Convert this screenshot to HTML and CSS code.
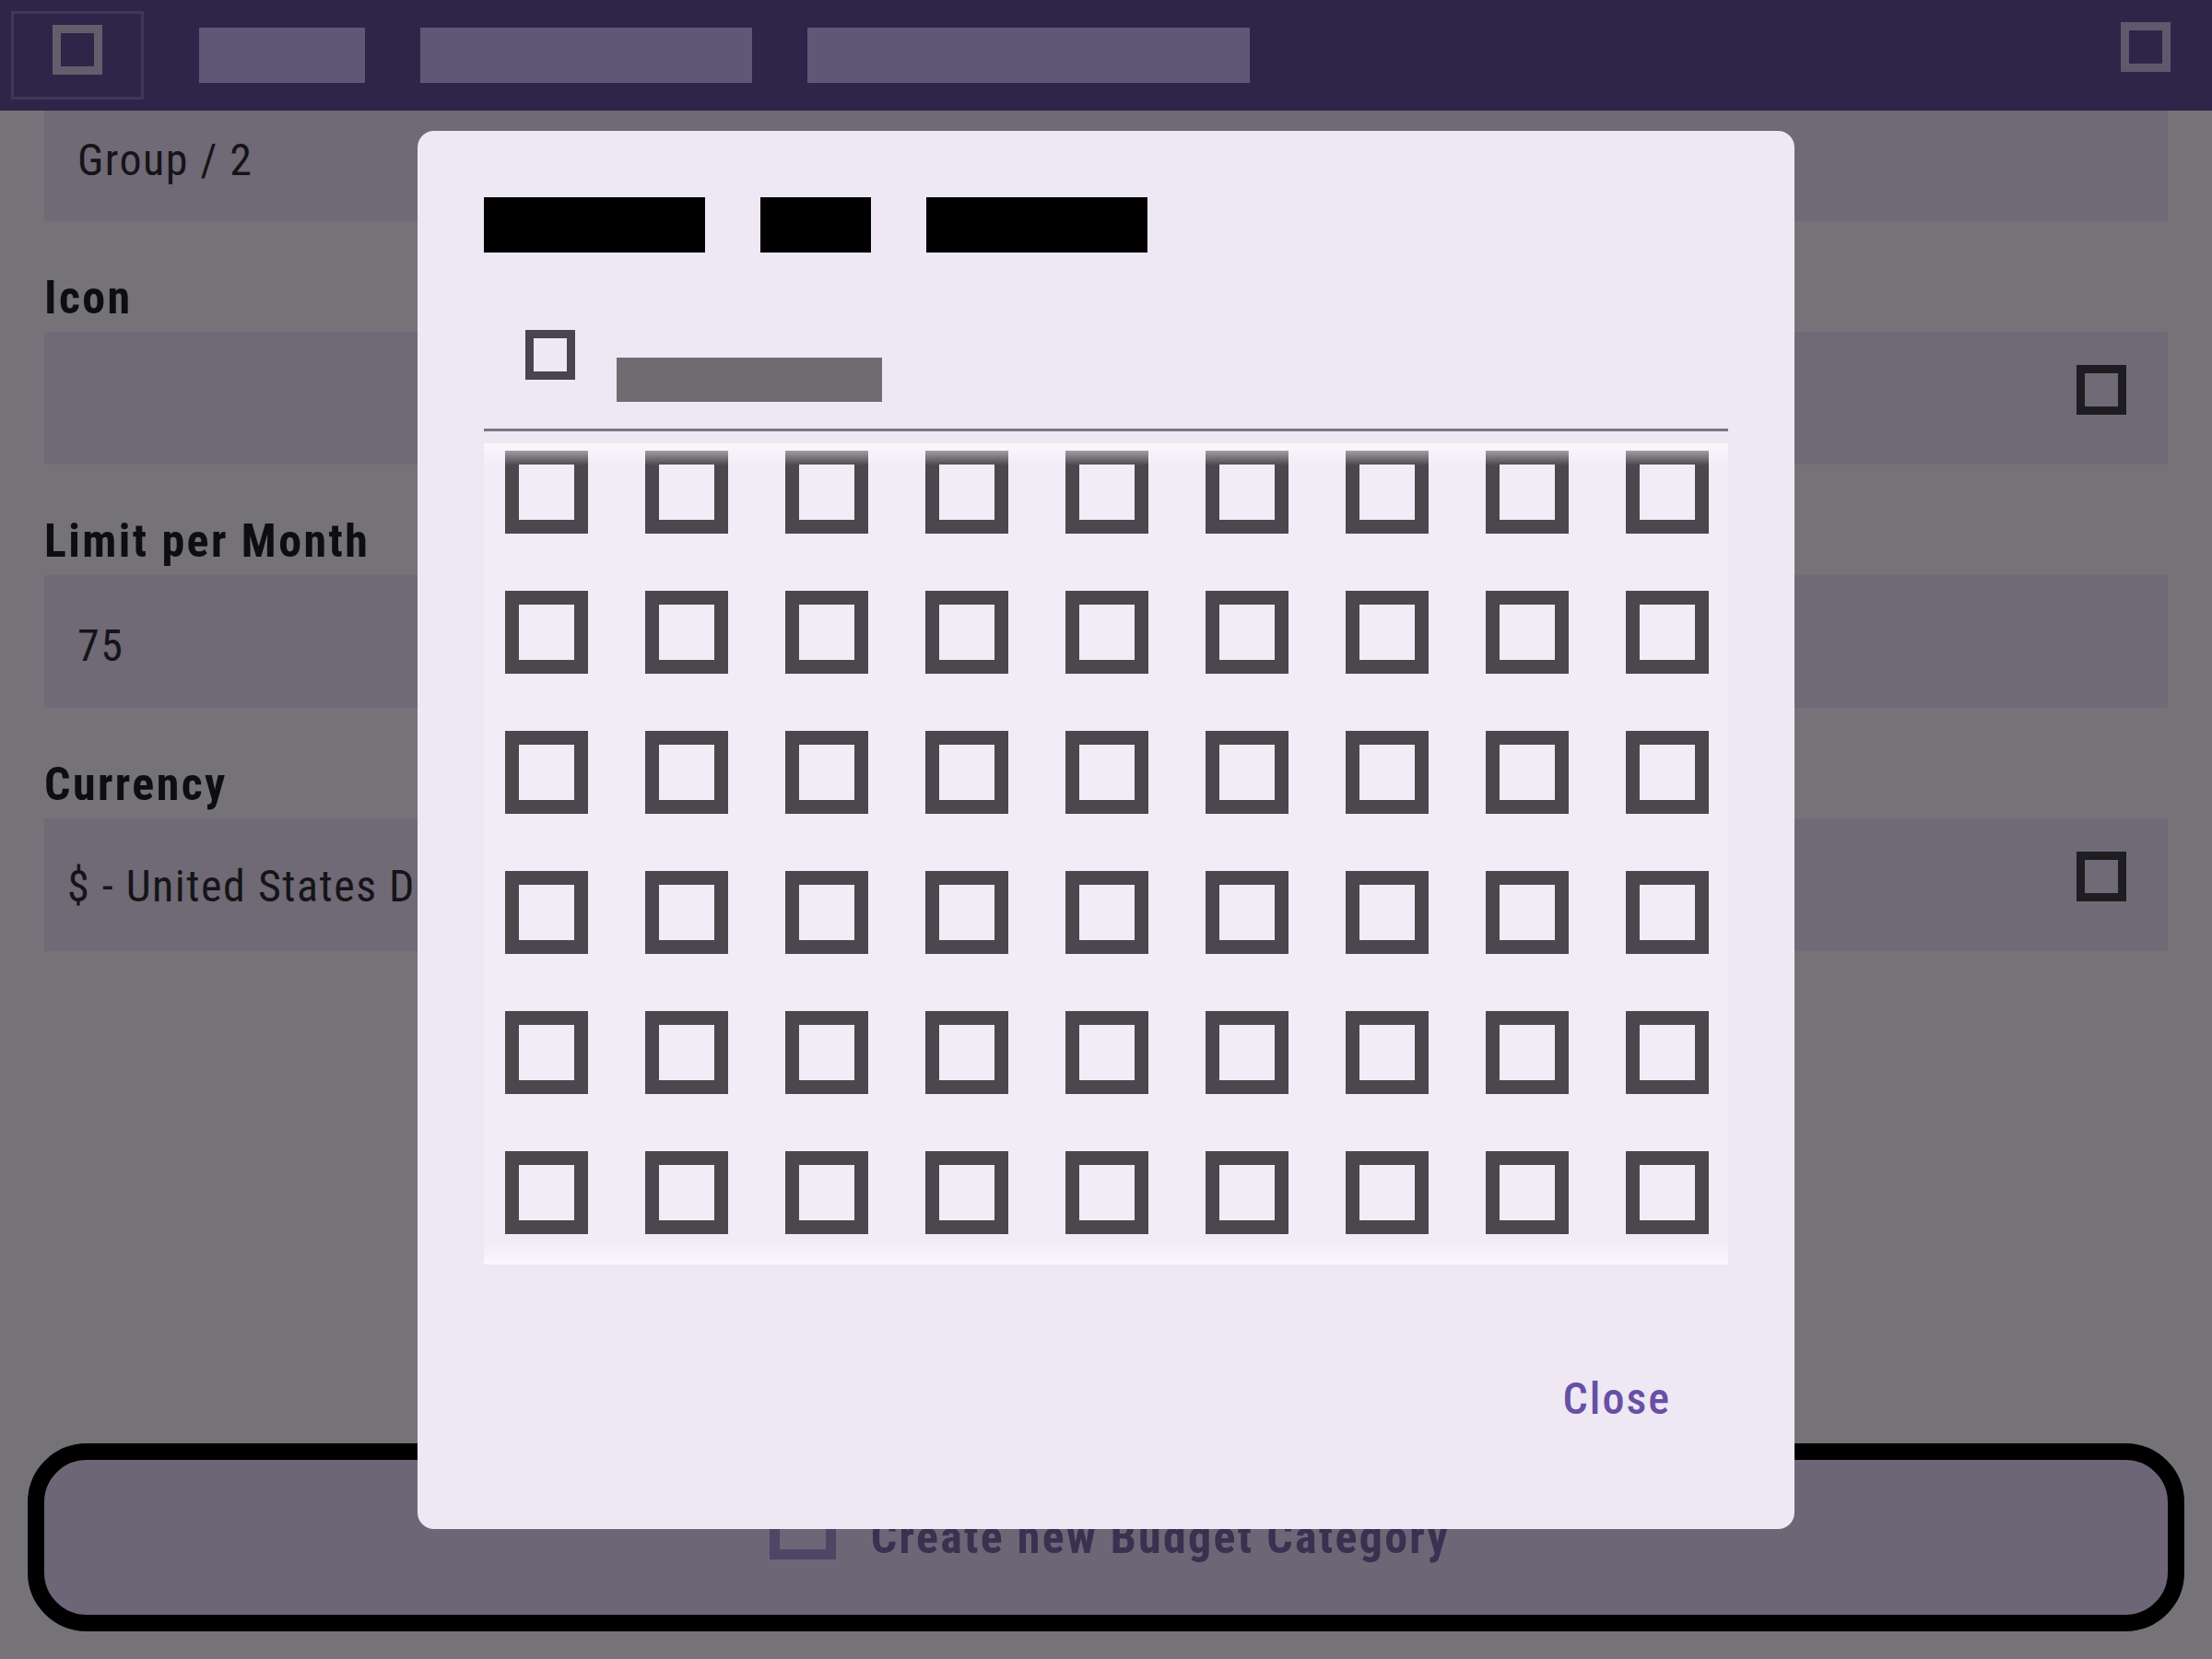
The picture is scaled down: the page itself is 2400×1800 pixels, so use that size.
FILE: index.html
```html
<!DOCTYPE html>
<html lang="en">
<head>
<meta charset="utf-8">
<title>New Budget Category</title>
<link rel="stylesheet" href="styles.css">
</head>
<body>
<div class="app">
  <header class="topbar">
    <div class="nav-btn"><span class="sq sq-nav"></span></div>
    <nav class="tabs">
      <span class="tab tab-1"></span>
      <span class="tab tab-2"></span>
      <span class="tab tab-3"></span>
    </nav>
    <span class="sq sq-top"></span>
  </header>

  <main class="form">
    <div class="field field-first"><span class="field-text">Group / 2</span></div>

    <div class="label">Icon</div>
    <div class="field"><span class="field-text"></span><span class="sq sq-field"></span></div>

    <div class="label">Limit per Month</div>
    <div class="field"><span class="field-text">75</span></div>

    <div class="label">Currency</div>
    <div class="field field-select"><span class="field-text">$ - United States Dollar</span><span class="sq sq-field"></span></div>
  </main>

  <div class="create-btn">
    <span class="sq sq-create"></span>
    <span class="create-text">Create new Budget Category</span>
  </div>
</div>

<div class="scrim">
  <div class="dialog">
    <div class="dialog-title">
      <span class="redact r-1"></span>
      <span class="redact r-2"></span>
      <span class="redact r-3"></span>
    </div>
    <div class="search">
      <span class="sq sq-search"></span>
      <span class="placeholder"></span>
    </div>
    <div class="grid-wrap">
      <div class="icon-grid">
        <span class="sq sq-grid"></span><span class="sq sq-grid"></span><span class="sq sq-grid"></span><span class="sq sq-grid"></span><span class="sq sq-grid"></span><span class="sq sq-grid"></span><span class="sq sq-grid"></span><span class="sq sq-grid"></span><span class="sq sq-grid"></span>
        <span class="sq sq-grid"></span><span class="sq sq-grid"></span><span class="sq sq-grid"></span><span class="sq sq-grid"></span><span class="sq sq-grid"></span><span class="sq sq-grid"></span><span class="sq sq-grid"></span><span class="sq sq-grid"></span><span class="sq sq-grid"></span>
        <span class="sq sq-grid"></span><span class="sq sq-grid"></span><span class="sq sq-grid"></span><span class="sq sq-grid"></span><span class="sq sq-grid"></span><span class="sq sq-grid"></span><span class="sq sq-grid"></span><span class="sq sq-grid"></span><span class="sq sq-grid"></span>
        <span class="sq sq-grid"></span><span class="sq sq-grid"></span><span class="sq sq-grid"></span><span class="sq sq-grid"></span><span class="sq sq-grid"></span><span class="sq sq-grid"></span><span class="sq sq-grid"></span><span class="sq sq-grid"></span><span class="sq sq-grid"></span>
        <span class="sq sq-grid"></span><span class="sq sq-grid"></span><span class="sq sq-grid"></span><span class="sq sq-grid"></span><span class="sq sq-grid"></span><span class="sq sq-grid"></span><span class="sq sq-grid"></span><span class="sq sq-grid"></span><span class="sq sq-grid"></span>
        <span class="sq sq-grid"></span><span class="sq sq-grid"></span><span class="sq sq-grid"></span><span class="sq sq-grid"></span><span class="sq sq-grid"></span><span class="sq sq-grid"></span><span class="sq sq-grid"></span><span class="sq sq-grid"></span><span class="sq sq-grid"></span>
      </div>
    </div>
    <div class="actions">
      <span class="close-btn">Close</span>
    </div>
  </div>
</div>
</body>
</html>
```

FILE: styles.css
```css
* { box-sizing: border-box; }

html, body {
  margin: 0;
  padding: 0;
}

body {
  width: 2400px;
  height: 1800px;
  overflow: hidden;
  background: #757377;
  font-family: "Roboto Condensed", Roboto, "Noto Sans", "Liberation Sans", sans-serif;
  font-stretch: 85%;
}

.app {
  height: 1800px;
  display: flex;
  flex-direction: column;
}

/* generic outlined square icon */
.sq {
  display: block;
  flex: none;
  border-style: solid;
  background: transparent;
}

/* ---------- top bar ---------- */
.topbar {
  height: 120px;
  flex: none;
  background: #2f2549;
  display: flex;
  align-items: center;
}

.nav-btn {
  width: 144px;
  height: 96px;
  margin-left: 12px;
  border: 3px solid #3f3858;
  display: flex;
  align-items: center;
  justify-content: center;
}

.sq-nav {
  width: 54px;
  height: 54px;
  border-width: 9px;
  border-color: #625e6b;
  margin-bottom: 12px;
}

.tabs {
  display: flex;
  gap: 60px;
  margin-left: 60px;
}

.tab {
  display: block;
  height: 60px;
  background: #5f5775;
}
.tab-1 { width: 180px; }
.tab-2 { width: 360px; }
.tab-3 { width: 480px; }

.sq-top {
  width: 54px;
  height: 54px;
  border-width: 9px;
  border-color: #5f5a6b;
  margin-left: auto;
  margin-right: 45px;
  margin-bottom: 18px;
}

/* ---------- form ---------- */
.form {
  flex: 1;
  padding: 0 48px;
}

.field {
  height: 144px;
  background: #6f6a76;
  display: flex;
  align-items: center;
  padding-left: 36px;
  padding-right: 45px;
}

.field-first {
  height: 120px;
}

.field-text {
  flex: 1;
  font-size: 48px;
  line-height: 56px;
  font-weight: 400;
  color: #151418;
  letter-spacing: 1.5px;
  white-space: nowrap;
  padding-top: 9px;
}

.field-first .field-text {
  padding-top: 0;
  padding-bottom: 13px;
}

.field-select {
  padding-left: 25px;
}

.field-select .field-text {
  padding-top: 3px;
}

.sq-field {
  width: 54px;
  height: 54px;
  border-width: 9px;
  border-color: #1e1d22;
  margin-bottom: 18px;
}

.label {
  font-size: 50px;
  line-height: 60px;
  font-weight: 700;
  color: #0e0e10;
  letter-spacing: 2.4px;
  margin: 53px 0 7px;
}

/* ---------- bottom action button ---------- */
.create-btn {
  flex: none;
  height: 204px;
  margin: 0 30px 30px;
  padding-left: 8px;
  border: 18px solid #000;
  border-radius: 64px;
  background: #6c6676;
  display: flex;
  align-items: center;
  justify-content: center;
  gap: 38px;
}

.sq-create {
  width: 72px;
  height: 72px;
  border-width: 11px;
  border-color: #4f4564;
  margin-top: -24px;
}

.create-text {
  font-size: 50px;
  line-height: 56px;
  font-weight: 700;
  color: #3a3050;
  letter-spacing: 2.3px;
  padding-top: 0;
}

/* ---------- dialog ---------- */
.scrim {
  position: fixed;
  inset: 0;
  display: flex;
  align-items: center;
  justify-content: center;
}

.dialog {
  width: 1494px;
  height: 1517px;
  background: #eee8f4;
  border-radius: 18px;
  padding: 72px 72px 0;
  display: flex;
  flex-direction: column;
}

.dialog-title {
  display: flex;
  gap: 60px;
  margin-bottom: 24px;
}

.redact {
  display: block;
  height: 60px;
  background: #000;
}
.r-1 { width: 240px; }
.r-2 { width: 120px; }
.r-3 { width: 240px; }

.search {
  height: 170px;
  flex: none;
  border-bottom: 3px solid #7c7486;
  display: flex;
  align-items: flex-start;
  padding-left: 45px;
}

.sq-search {
  width: 54px;
  height: 54px;
  border-width: 9px;
  border-color: #49454f;
  margin-top: 60px;
}

.placeholder {
  display: block;
  width: 288px;
  height: 48px;
  margin-top: 90px;
  margin-left: 45px;
  background: #6e6b71;
}

.grid-wrap {
  position: relative;
  flex: none;
  height: 891px;
  margin-top: 13px;
  overflow: hidden;
  background: #f1ecf6;
}

.grid-wrap::before,
.grid-wrap::after {
  content: "";
  position: absolute;
  left: 0;
  right: 0;
  height: 24px;
  pointer-events: none;
}

.grid-wrap::before {
  top: 0;
  background: linear-gradient(to bottom, rgba(255, 251, 255, 0.72), rgba(255, 251, 255, 0));
}

.grid-wrap::after {
  bottom: 0;
  background: linear-gradient(to top, rgba(255, 251, 255, 0.72), rgba(255, 251, 255, 0));
}

.icon-grid {
  display: grid;
  grid-template-columns: repeat(9, 90px);
  gap: 62px;
  padding: 8px 0 0 23px;
}

.sq-grid {
  width: 90px;
  height: 90px;
  border-width: 15px;
  border-color: #4a484c;
}

.actions {
  display: flex;
  justify-content: flex-end;
  padding-top: 118px;
}

.close-btn {
  font-size: 48px;
  line-height: 56px;
  font-weight: 500;
  color: #6750a4;
  letter-spacing: 2px;
  margin-right: 62px;
}
```
